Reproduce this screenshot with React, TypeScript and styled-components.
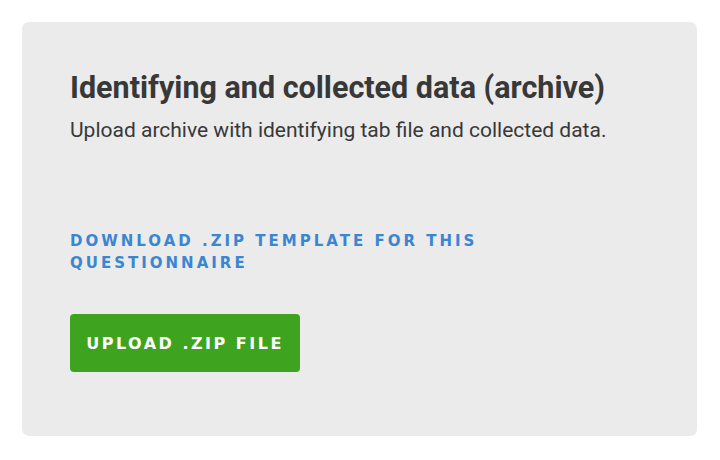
import styled, { createGlobalStyle } from "styled-components";

const GlobalStyle = createGlobalStyle`
  html, body {
    margin: 0;
    padding: 0;
    background: #ffffff;
  }
`;

const App: React.FC = () => {
  return (
    <Page>
      <GlobalStyle />
      <Card>
        <Title>Identifying and collected data (archive)</Title>
        <Description>
          Upload archive with identifying tab file and collected data.
        </Description>
        <TemplateLink href="#">
          Download .zip template for this questionnaire
        </TemplateLink>
        <UploadButton type="button">Upload .zip file</UploadButton>
      </Card>
    </Page>
  );
};

const Page = styled.div`
  box-sizing: border-box;
  width: 720px;
  height: 460px;
  padding: 22px 23px 24px 22px;
`;

const Card = styled.section`
  box-sizing: border-box;
  display: flex;
  flex-direction: column;
  align-items: flex-start;
  height: 414px;
  padding: 48px 48px 64px 48px;

  background-color: #ebebeb;
  border-radius: 7px;
`;

const Title = styled.h2`
  margin: 0;
  font-family: Roboto, "Liberation Sans", sans-serif;
  font-weight: 700;
  font-size: 30.5px;
  line-height: 36px;
  color: #383838;
`;

const Description = styled.p`
  margin: 11px 0 0 0;
  font-family: Roboto, "Liberation Sans", sans-serif;
  font-size: 21px;
  line-height: 26px;
  color: #383838;
`;

const TemplateLink = styled.a`
  margin-top: 87px;
  max-width: 430px;
  font-family: "DejaVu Sans", sans-serif;
  font-weight: 700;
  font-size: 15px;
  line-height: 22px;
  letter-spacing: 3px;
  text-transform: uppercase;
  text-decoration: none;
  color: #3a86d2;
`;

const UploadButton = styled.button`
  margin-top: 40px;
  width: 230px;
  height: 58px;
  padding: 0;

  font-family: "DejaVu Sans", sans-serif;
  font-weight: 700;
  font-size: 16px;
  letter-spacing: 2.5px;
  text-transform: uppercase;
  color: #ffffff;

  background-color: #3ea41f;
  border: none;
  border-radius: 4px;
`;

export default App;
